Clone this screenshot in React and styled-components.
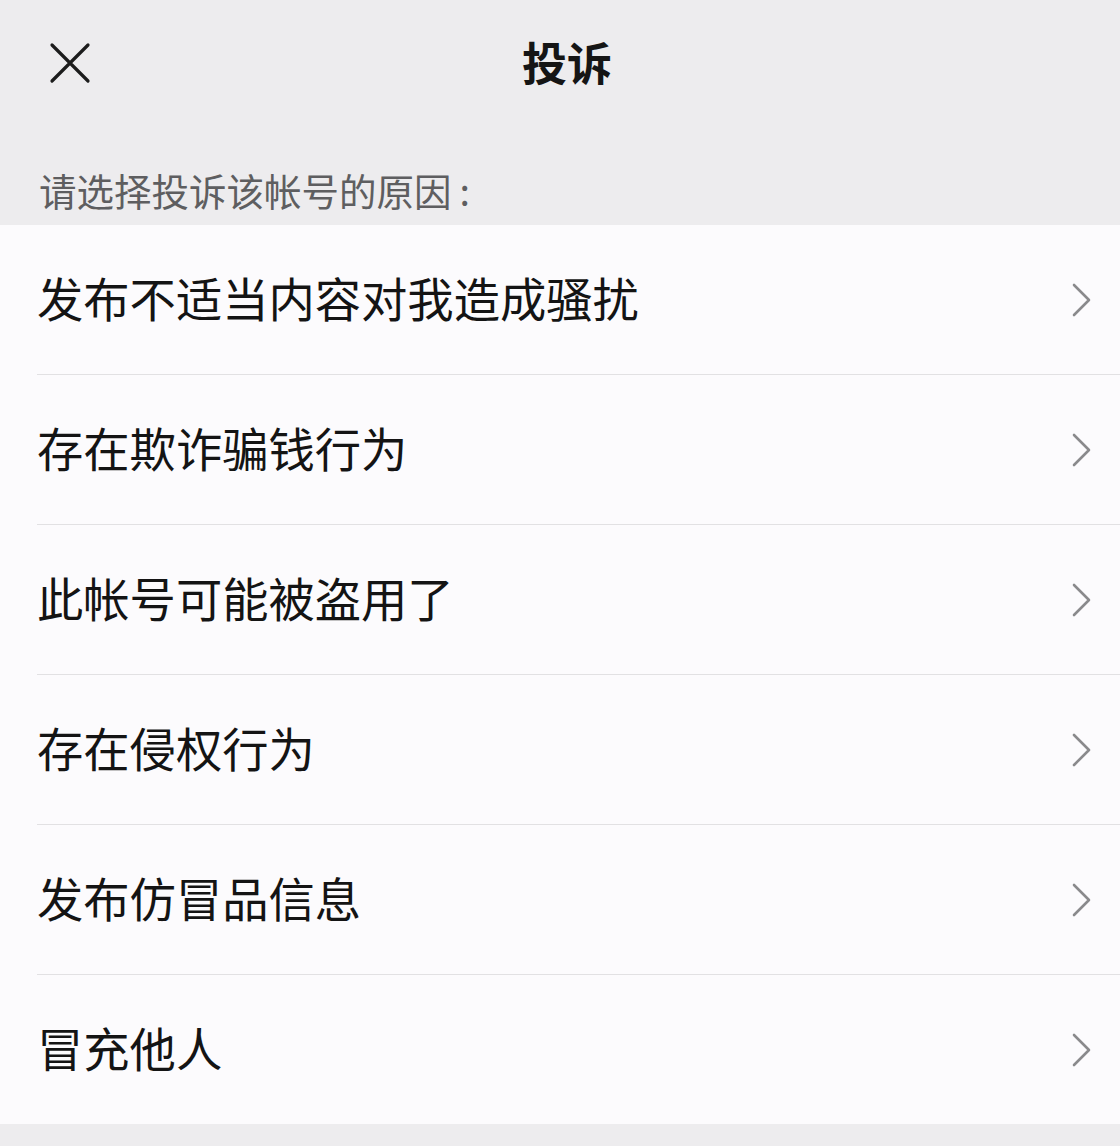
import React from 'react';
import styled, { createGlobalStyle } from 'styled-components';

const GlobalStyle = createGlobalStyle`
	html, body {
		margin: 0;
		padding: 0;
		background: #edecee;
	}
	body {
		font-family: "Noto Sans CJK SC", "Noto Sans", sans-serif;
	}
`;

const Page = styled.div`
	width: 1120px;
	height: 1146px;
	background: #edecee;
	overflow: hidden;
`;

const NavBar = styled.header`
	height: 128px;
	display: grid;
	grid-template-columns: 200px 1fr 200px;
	align-items: center;
`;

const CloseButton = styled.button`
	width: 44px;
	height: 44px;
	margin-left: 48px;
	margin-top: -2px;
	padding: 0;
	border: none;
	background: none;
	display: flex;
	align-items: center;
	justify-content: center;
`;

const Title = styled.h1`
	margin: 0;
	margin-top: -6px;
	text-align: center;
	font-size: 45px;
	font-weight: 700;
	color: #151515;
	transform: translateX(7px);
`;

const Hint = styled.p`
	margin: 0;
	height: 97px;
	padding: 26px 0 0 39px;
	box-sizing: border-box;
	display: flex;
	align-items: center;
	font-size: 37.5px;
	color: #5e5e60;
	font-weight: 400;
`;

const Colon = styled.span`
	margin-left: 8px;
`;

const List = styled.ul`
	list-style: none;
	margin: 0;
	padding: 0;
	background: #fcfbfd;
	padding-left: 37px;
`;

const Row = styled.li`
	height: 149px;
	display: flex;
	align-items: center;
	justify-content: space-between;
	border-top: ${ props => props.first ? 'none' : '1px solid #e2e1e3' };
`;

const Label = styled.span`
	font-size: 46.3px;
	color: #141414;
	margin-top: -7px;
`;

const Chevron = styled.svg`
	width: 20px;
	height: 34px;
	margin-right: 28px;
	flex-shrink: 0;
`;

const reasons = [
	'发布不适当内容对我造成骚扰',
	'存在欺诈骗钱行为',
	'此帐号可能被盗用了',
	'存在侵权行为',
	'发布仿冒品信息',
	'冒充他人',
];

const App = () => (
	<Page>
		<GlobalStyle />
		<NavBar>
			<CloseButton aria-label='关闭'>
				<svg width='42' height='42' viewBox='0 0 42 42'>
					<path d='M3 3 L39 39 M39 3 L3 39' stroke='#1c1c1c' strokeWidth='3.2' strokeLinecap='round' />
				</svg>
			</CloseButton>
			<Title>投诉</Title>
			<div />
		</NavBar>
		<Hint>请选择投诉该帐号的原因<Colon>:</Colon></Hint>
		<List>
			{reasons.map((reason, i) => (
				<Row key={reason} first={i === 0}>
					<Label>{reason}</Label>
					<Chevron viewBox='0 0 20 34'>
						<path d='M2 2 L17 17 L2 32' fill='none' stroke='#8a8a8c' strokeWidth='2.6' strokeLinecap='round' strokeLinejoin='round' />
					</Chevron>
				</Row>
			))}
		</List>
	</Page>
);

export default App;
